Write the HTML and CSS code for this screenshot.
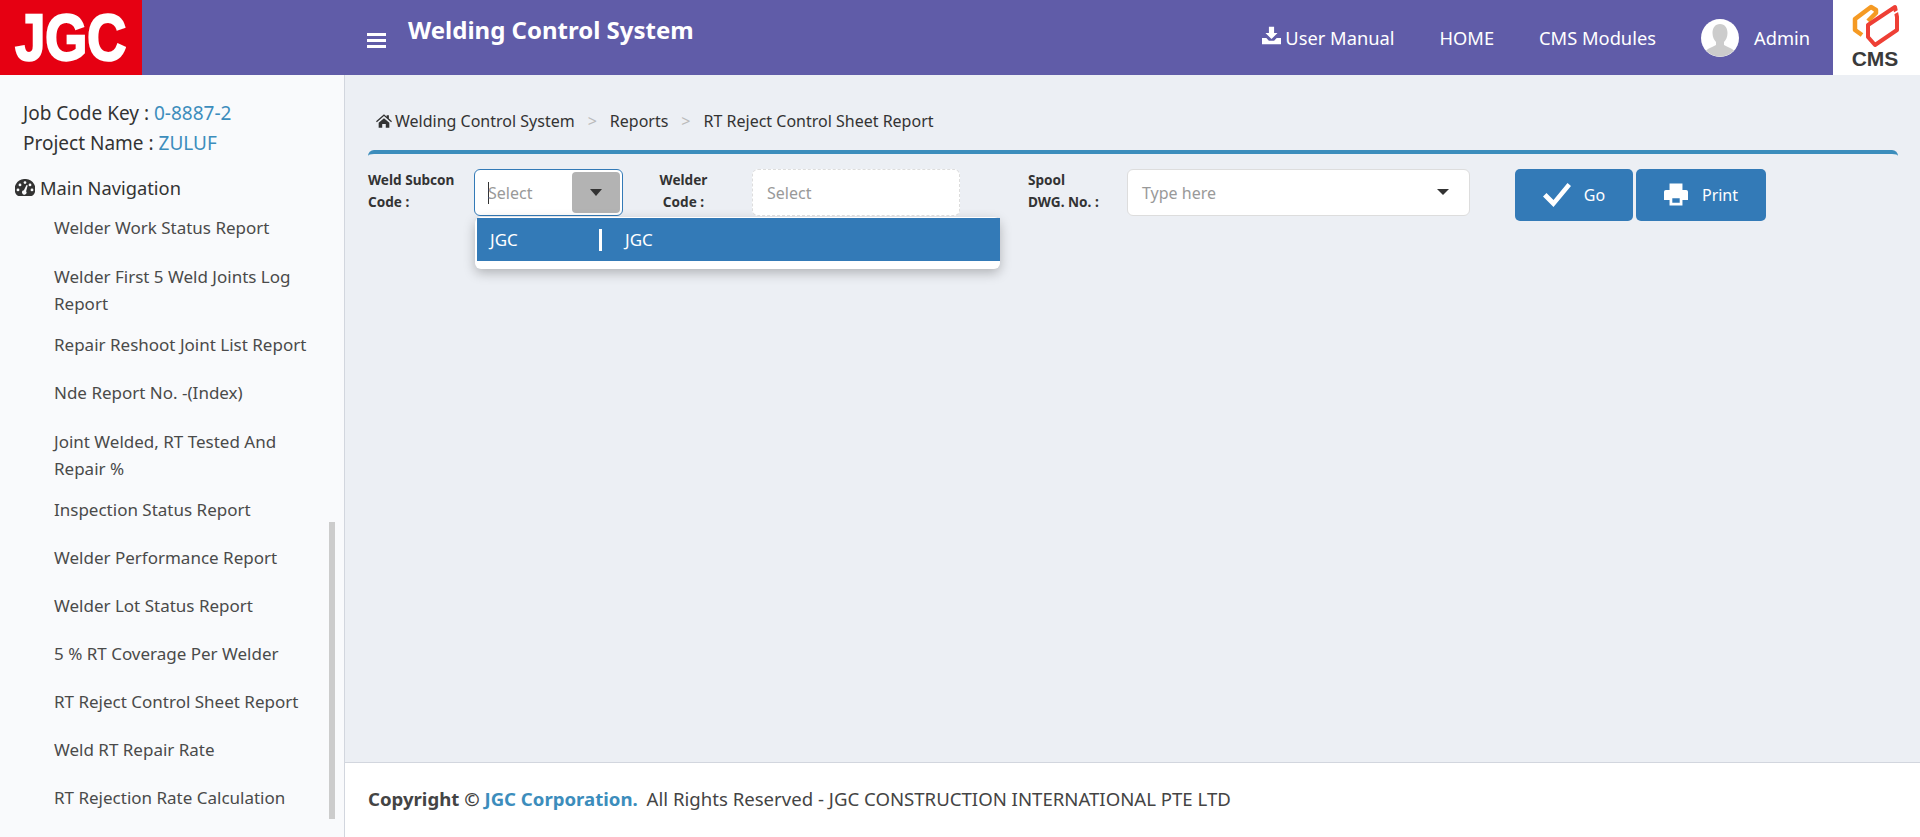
FILE: index.html
```html
<!DOCTYPE html>
<html lang="en">
<head>
  <meta charset="UTF-8">
  <title>Welding Control System</title>
  <link rel="stylesheet" href="styles.css">
</head>
<body>
  <!-- Top bar -->
  <header class="topbar">
    <div class="logo-jgc"><span>JGC</span></div>
    <div class="menu-toggle"><i></i><i></i><i></i></div>
    <h1 class="app-title">Welding Control System</h1>
    <nav class="top-links">
      <a class="top-link top-manual" href="#">
        <svg class="icon-download" viewBox="0 0 22 20"><path fill="#fff" d="M8 0h6v7h4l-7 7-7-7h4zM0 13h5l3 3h6l3-3h5v7H0z"/></svg>
        User Manual
      </a>
      <a class="top-link top-home" href="#">HOME</a>
      <a class="top-link top-cms" href="#">CMS Modules</a>
      <svg class="avatar" viewBox="0 0 38 38">
        <circle cx="19" cy="19" r="19" fill="#fff"/>
        <path fill="#ccc" d="M19 5c5 0 7.500 4 7.500 9 0 4-1.500 7-3.500 9v3c3 2 7 2.500 10 5.500A19 19 0 0 1 5 31.500C8 28.500 12 28 15 26v-3c-2-2-3.500-5-3.500-9 0-5 2.500-9 7.500-9z"/>
      </svg>
      <a class="top-link top-admin" href="#">Admin</a>
    </nav>
    <div class="logo-cms">
      <svg viewBox="0 0 87 48" class="logo-cms-mark">
        <path fill="none" stroke="#f59a23" stroke-width="4.500" stroke-linejoin="round" d="M29 35l-7-5V19L38 7l5 3v3l-8 8"/>
        <path fill="none" stroke="#ee3f35" stroke-width="4" stroke-linejoin="round" d="M35 25 62 7l2 10v13L42 45l-7-8z"/>
        <path stroke="#fff" stroke-width="2" d="M58 15l9-5"/>
      </svg>
      <span class="logo-cms-text">CMS</span>
    </div>
  </header>

  <div class="layout">
    <!-- Side menu -->
    <aside class="sidebar">
      <div class="job-info">
        <div>Job Code Key : <a href="#">0-8887-2</a></div>
        <div>Project Name : <a href="#">ZULUF</a></div>
      </div>
      <div class="nav-title">
        <svg class="icon-gauge" viewBox="0 0 20 18">
          <path fill="#333" fill-rule="evenodd" d="M10 0a10 10 0 0 1 8.500 15.800 2.500 2.500 0 0 1-2 1.200h-13a2.500 2.500 0 0 1-2-1.200A10 10 0 0 1 10 0zM10 2.200a1.400 1.400 0 1 0 0 2.800 1.400 1.400 0 0 0 0-2.800zM5 4.500a1.400 1.400 0 1 0 0 2.800 1.400 1.400 0 0 0 0-2.800zM15 4.500a1.400 1.400 0 1 0 0 2.800 1.400 1.400 0 0 0 0-2.800zM3 9.500a1.400 1.400 0 1 0 0 2.800 1.400 1.400 0 0 0 0-2.800zM17 9.500a1.400 1.400 0 1 0 0 2.800 1.400 1.400 0 0 0 0-2.800zM11.500 6l-2.600 5.300a2.200 2.200 0 1 0 2.200 1l1.600-5.800z"/>
        </svg>
        Main Navigation
      </div>
      <ul class="nav-list">
        <li><a href="#">Welder Work Status Report</a></li>
        <li class="wrapped"><a href="#">Welder First 5 Weld Joints Log Report</a></li>
        <li><a href="#">Repair Reshoot Joint List Report</a></li>
        <li><a href="#">Nde Report No. -(Index)</a></li>
        <li class="wrapped"><a href="#">Joint Welded, RT Tested And Repair %</a></li>
        <li><a href="#">Inspection Status Report</a></li>
        <li><a href="#">Welder Performance Report</a></li>
        <li><a href="#">Welder Lot Status Report</a></li>
        <li><a href="#">5 % RT Coverage Per Welder</a></li>
        <li><a href="#">RT Reject Control Sheet Report</a></li>
        <li><a href="#">Weld RT Repair Rate</a></li>
        <li><a href="#">RT Rejection Rate Calculation</a></li>
      </ul>
      <div class="side-scroll"></div>
    </aside>

    <main class="main">
      <div class="content">
        <div class="breadcrumb">
          <svg class="icon-home" viewBox="0 0 18 15"><path fill="#333" d="M9 0l3 2.600V1h2.500v3.700L18 7.800l-1 1.100L9 2 1 8.900 0 7.800zM3 9.500 9 4.300l6 5.200V15h-4v-4H7v4H3z"/></svg>
          <span class="crumb">Welding Control System</span>
          <span class="crumb-sep">&gt;</span>
          <span class="crumb">Reports</span>
          <span class="crumb-sep">&gt;</span>
          <span class="crumb">RT Reject Control Sheet Report</span>
        </div>

        <form class="filter-box">
          <label class="field-label label-subcon">Weld Subcon<br>Code :</label>
          <div class="combo combo-active">
            <span class="caret-line"></span>
            <span class="placeholder">Select</span>
            <span class="combo-btn"><i class="arrow"></i></span>
            <!-- Open dropdown -->
            <div class="dropdown">
              <div class="dropdown-option">
                <span class="opt-code">JGC</span>
                <span class="opt-name">JGC</span>
              </div>
            </div>
          </div>
          <label class="field-label label-welder">Welder<br>Code :</label>
          <div class="combo combo-disabled"><span class="placeholder">Select</span></div>
          <label class="field-label label-spool">Spool<br>DWG. No. :</label>
          <div class="combo combo-spool">
            <span class="placeholder">Type here</span>
            <i class="arrow"></i>
          </div>
          <button type="button" class="btn btn-go">
            <svg class="icon-check" viewBox="0 0 28 24"><path fill="#fff" d="M10.500 24 0 13.500 3.500 10l7 7L24.500 0 28 3z"/></svg>
            Go
          </button>
          <button type="button" class="btn btn-print">
            <svg class="icon-print" viewBox="0 0 26 24"><path fill="#fff" fill-rule="evenodd" d="M6 0h14v7h4a2 2 0 0 1 2 2v9h-6v6H6v-6H0V9a2 2 0 0 1 2-2h4zM9 16v5h8v-5z"/></svg>
            Print
          </button>
        </form>
      </div>

      <footer class="footer">
        <p class="footer-text"><b class="footer-brand">Copyright &copy; <a href="#">JGC Corporation.</a></b> All Rights Reserved - JGC CONSTRUCTION INTERNATIONAL PTE LTD</p>
      </footer>
    </main>
  </div>
</body>
</html>
```

FILE: styles.css
```css
* {
  box-sizing: border-box;
}

html,
body {
  margin: 0;
  height: 837px;
  overflow: hidden;
}

body {
  font-family: "Noto Sans", "Open Sans", sans-serif;
  color: #333;
  background-color: #eceff4;
}

a {
  text-decoration: none;
}

/* Top bar */
.topbar {
  display: flex;
  align-items: center;
  height: 75px;
  background-color: #605ca8;
  color: #fff;
}

.logo-jgc {
  display: flex;
  align-items: center;
  justify-content: center;
  width: 142px;
  height: 75px;
  background-color: #e60012;
  overflow: hidden;
}

.logo-jgc span {
  font-family: "Liberation Sans", sans-serif;
  font-size: 65px;
  font-weight: bold;
  line-height: 75px;
  color: #fff;
  -webkit-text-stroke: 2.5px #fff;
  transform: scaleX(0.83);
}

.menu-toggle {
  display: flex;
  flex-direction: column;
  gap: 3px;
  width: 19px;
  margin: 6px 22px 0 225px;
}

.menu-toggle i {
  display: block;
  height: 3px;
  background-color: #fff;
}

.app-title {
  margin: 0 0 16px;
  font-size: 24px;
  font-weight: 700;
  color: #fff;
}

.top-links {
  display: flex;
  align-items: center;
  margin-left: auto;
}

.top-link {
  color: #fff;
  font-size: 18.300px;
  line-height: 26px;
  white-space: nowrap;
}

.top-manual {
  display: flex;
  align-items: center;
  gap: 4px;
}

.icon-download {
  width: 19px;
  height: 19px;
  margin-top: -4px;
}

.top-home {
  margin-left: 45px;
}

.top-cms {
  margin-left: 45px;
}

.avatar {
  width: 38px;
  height: 38px;
  margin-left: 45px;
}

.top-admin {
  margin-left: 15px;
  margin-right: 23px;
}

.logo-cms {
  display: flex;
  flex-direction: column;
  align-items: center;
  width: 87px;
  height: 75px;
  background-color: #fff;
}

.logo-cms-mark {
  display: block;
  width: 87px;
  height: 48px;
}

.logo-cms-text {
  margin: 0 3px 0 0;
  font-family: "Liberation Sans", sans-serif;
  font-size: 21px;
  font-weight: bold;
  line-height: 22px;
  color: #3a3a3a;
}

/* Page body */
.layout {
  display: flex;
  height: 762px;
}

.sidebar {
  position: relative;
  flex: 0 0 345px;
  padding-top: 23px;
  border-right: 1px solid #d2d6de;
  background-color: #f9fafc;
  overflow: hidden;
}

.job-info {
  padding-left: 23px;
  font-size: 19px;
  line-height: 30px;
  color: #333;
}

.job-info a {
  color: #3c8dbc;
}

.nav-title {
  display: flex;
  align-items: center;
  gap: 5px;
  margin: 15px 0 1px;
  padding-left: 15px;
  font-size: 18.300px;
  line-height: 30px;
}

.icon-gauge {
  width: 20px;
  height: 18px;
}

.nav-list {
  list-style-type: none;
  margin: 0;
  padding: 0;
}

.nav-list li {
  height: 48px;
  padding: 11px 30px 0 54px;
  font-size: 17px;
  line-height: 26.500px;
}

.nav-list li.wrapped {
  height: 69px;
  padding-top: 12px;
}

.nav-list a {
  color: #4a4a4a;
}

.side-scroll {
  position: absolute;
  left: 329px;
  top: 447px;
  width: 6px;
  height: 297px;
  background-color: #ccc;
}

.main {
  display: flex;
  flex: 1;
  flex-direction: column;
}

.content {
  flex: 1;
  padding: 33px 22px 0 23px;
}

.breadcrumb {
  display: flex;
  align-items: center;
  height: 26px;
  padding-left: 8px;
  font-size: 16px;
  color: #333;
}

.icon-home {
  width: 16px;
  height: 14px;
  margin-right: 3px;
}

.crumb-sep {
  margin: 0 13px;
  color: #bbb;
}

.filter-box {
  display: flex;
  align-items: flex-start;
  margin-top: 16px;
  padding-top: 15px;
  border-top: 4px solid #3c8dbc;
  border-radius: 6px 6px 0 0;
}

.field-label {
  font-size: 13.600px;
  font-weight: 700;
  line-height: 22px;
  color: #333;
}

.label-subcon {
  width: 106px;
}

.label-welder {
  width: 129px;
  padding-right: 8px;
  text-align: center;
}

.label-spool {
  width: 99px;
  margin-left: 68px;
}

.combo {
  position: relative;
  display: flex;
  align-items: center;
  height: 47px;
  padding-left: 14px;
  border: 1px solid #ddd;
  border-radius: 6px;
  background-color: #fff;
}

.placeholder {
  font-size: 16px;
  color: #999;
}

.combo-active {
  width: 149px;
  padding-left: 13px;
  border-color: #337ab7;
}

.caret-line {
  width: 1px;
  height: 22px;
  margin-right: -1px;
  background-color: #333;
}

.combo-btn {
  display: flex;
  align-items: center;
  justify-content: center;
  position: absolute;
  right: 2px;
  top: 2px;
  width: 48px;
  height: 41px;
  border-radius: 4px;
  background-color: #b3b3b3;
}

.arrow {
  display: block;
  width: 0;
  height: 0;
  border-top: 7px solid #333;
  border-left: 6.500px solid transparent;
  border-right: 6.500px solid transparent;
}

.dropdown {
  position: absolute;
  left: 0;
  top: 47px;
  width: 525px;
  height: 52px;
  padding: 1px 0 0 2px;
  border-radius: 6px;
  background-color: #fff;
  box-shadow: 0 4px 12px rgba(0, 0, 0, 0.25);
}

.dropdown-option {
  display: flex;
  align-items: center;
  height: 43px;
  padding-left: 13px;
  background-color: #337ab7;
  color: #fff;
  font-size: 17px;
}

.opt-code {
  width: 112px;
  height: 22px;
  line-height: 22px;
  border-right: 3px solid #fff;
}

.opt-name {
  margin-left: 23px;
}

.combo-disabled {
  width: 208px;
  border: 1px dashed #ddd;
}

.combo-spool {
  width: 343px;
  justify-content: space-between;
  padding-right: 20px;
}

.combo-spool .arrow {
  border-top-width: 6px;
  border-left-width: 6px;
  border-right-width: 6px;
  margin-top: -2px;
}

.btn {
  display: flex;
  align-items: center;
  justify-content: center;
  height: 52px;
  padding: 0;
  border: 0;
  border-radius: 5px;
  background-color: #337ab7;
  color: #fff;
  font-family: inherit;
  font-size: 16px;
  cursor: pointer;
}

.btn-go {
  width: 118px;
  margin-left: 45px;
  gap: 13px;
}

.btn-print {
  width: 130px;
  margin-left: 3px;
  gap: 14px;
}

.icon-check {
  width: 28px;
  height: 24px;
}

.icon-print {
  width: 24px;
  height: 23px;
  margin-top: -2px;
}

.footer {
  display: flex;
  align-items: center;
  height: 75px;
  padding: 0 0 3px 23px;
  border-top: 1px solid #d2d6de;
  background-color: #fff;
  font-size: 18.600px;
  color: #444;
}

.footer-text {
  margin: 0;
}

.footer-brand {
  margin-right: 4px;
}

.footer a {
  color: #3c8dbc;
}
```
